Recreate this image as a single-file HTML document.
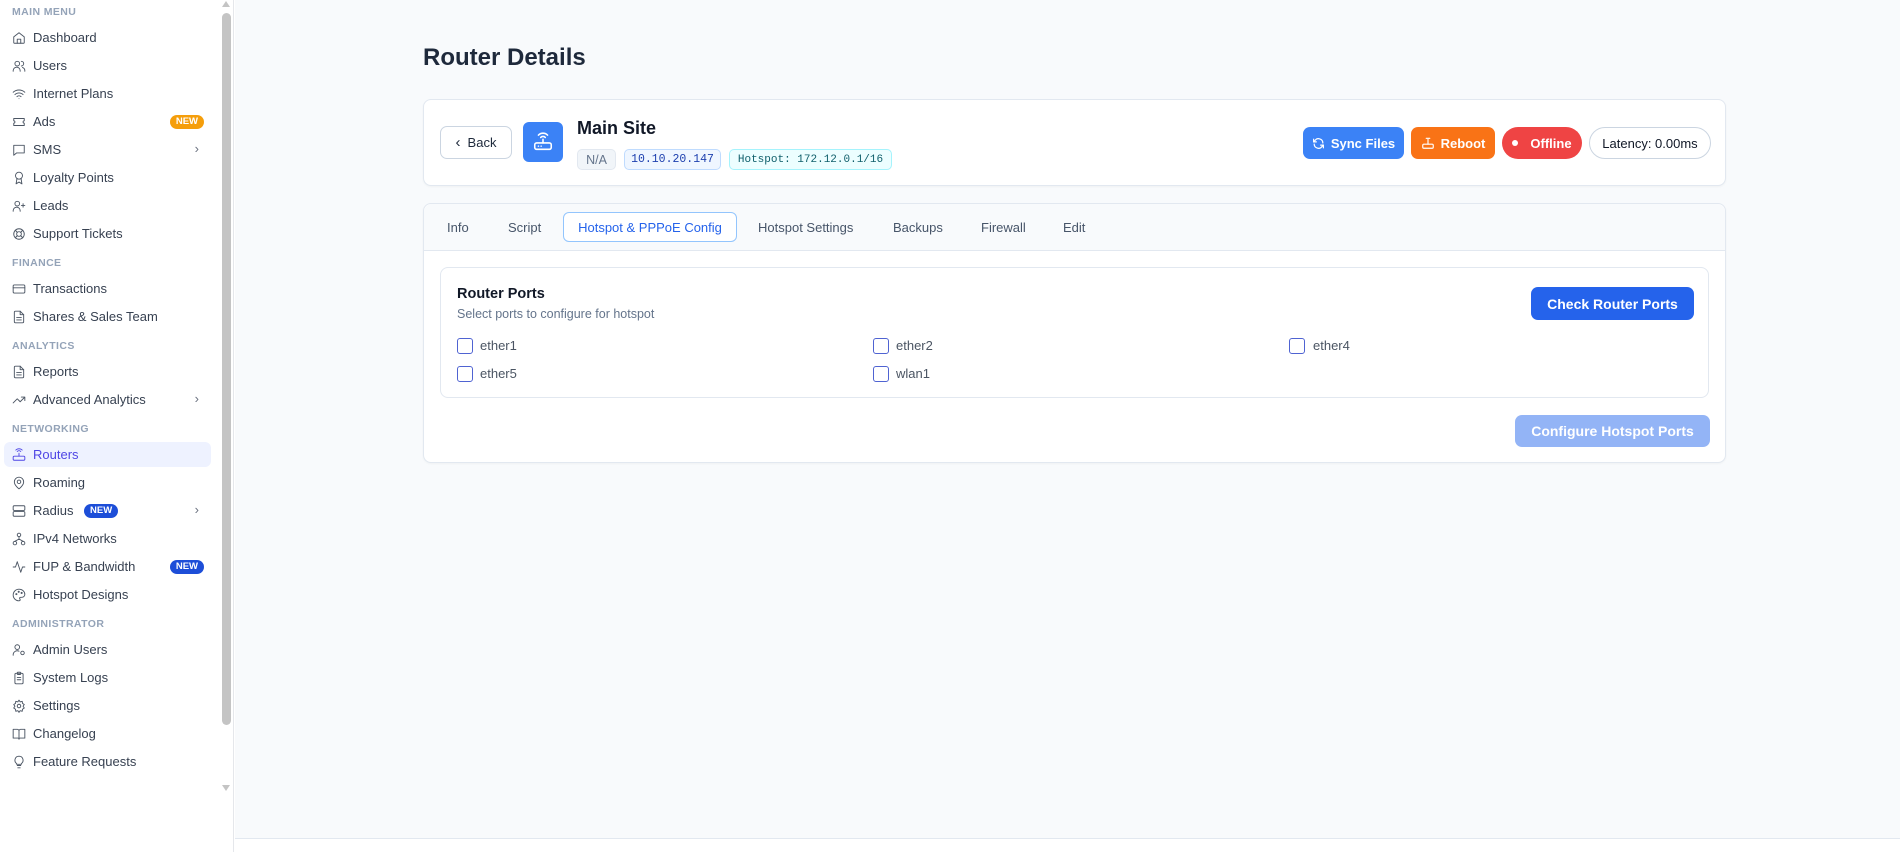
<!DOCTYPE html>
<html><head><meta charset="utf-8"><style>
*{box-sizing:border-box;margin:0;padding:0}
body{width:1900px;height:852px;overflow:hidden;font-family:"Liberation Sans",sans-serif;background:#fff;position:relative;color:#334155}
.sb{position:absolute;left:0;top:0;width:234px;height:852px;background:#fff;border-right:1px solid #e5e7eb}
.h{position:absolute;left:12px;font-size:10.5px;font-weight:bold;color:#94a3b8;letter-spacing:.4px}
.it{position:absolute;left:4px;width:207px;height:25px;font-size:13px;color:#374151;display:flex;align-items:center;padding-left:29px;border-radius:6px}
.it svg{position:absolute;left:8px;top:6px;width:14px;height:14px;fill:none;stroke:#4b5563;stroke-width:1.6;stroke-linecap:round;stroke-linejoin:round}
.it.act{background:#eef2ff;color:#4f46e5}
.it.act svg{stroke:#4f46e5}
.chev{position:absolute;right:12px;top:4px;color:#6b7280;font-size:13px}
.new{position:absolute;height:14px;border-radius:7px;font-size:9.5px;font-weight:bold;color:#fff;padding:0 6px;line-height:14px;top:5.5px}
.main{position:absolute;left:235px;top:0;width:1665px;height:839px;background:#f8fafc;border-bottom:1px solid #e2e8f0}
.card{position:absolute;background:#fff;border:1px solid #e2e8f0;border-radius:8px;box-shadow:0 1px 2px rgba(0,0,0,.04)}
.btn{position:absolute;border-radius:7px;color:#fff;font-weight:bold;font-size:13px;display:flex;align-items:center;justify-content:center;gap:6px}
.badge{position:absolute;height:21px;border-radius:5px;font-family:"Liberation Mono",monospace;font-size:11.5px;display:flex;align-items:center;justify-content:center}
.tab{position:absolute;top:220px;font-size:13px;color:#475569}
.cb{position:absolute;width:16px;height:16px;border:1.5px solid #4f63d2;border-radius:3px}
.lb{position:absolute;font-size:13px;color:#4b5563}
</style></head><body>
<div class="sb">
<div style="position:absolute;left:222px;top:13px;width:9px;height:712px;background:#c4c4c4;border-radius:5px"></div>
<div style="position:absolute;left:222px;top:1px;width:0;height:0;border-left:4.5px solid transparent;border-right:4.5px solid transparent;border-bottom:6px solid #c4c4c4"></div>
<div style="position:absolute;left:222px;top:785px;width:0;height:0;border-left:4.5px solid transparent;border-right:4.5px solid transparent;border-top:6px solid #c4c4c4"></div>

<div class="h" style="top:6px">MAIN MENU</div>
<div class="it" style="top:25px"><svg viewBox="0 0 24 24"><path d="M3 10l9-7 9 7v10a1 1 0 0 1-1 1H4a1 1 0 0 1-1-1z"/><path d="M9 21v-7h6v7"/></svg>Dashboard</div>
<div class="it" style="top:53px"><svg viewBox="0 0 24 24"><circle cx="9" cy="8" r="4"/><path d="M2 21v-1a6 6 0 0 1 12 0v1M16 4a4 4 0 0 1 0 8M22 21v-1a6 6 0 0 0-4-5.6"/></svg>Users</div>
<div class="it" style="top:81px"><svg viewBox="0 0 24 24"><path d="M2 9a15 15 0 0 1 20 0M5 13a10 10 0 0 1 14 0M8.5 16.5a5 5 0 0 1 7 0M12 20h.01"/></svg>Internet Plans</div>
<div class="it" style="top:109px"><svg viewBox="0 0 24 24"><path d="M3 6h18v4a2 2 0 0 0 0 4v4H3v-4a2 2 0 0 0 0-4z"/></svg>Ads<span class="new" style="right:7px;background:#f59e0b">NEW</span></div>
<div class="it" style="top:137px"><svg viewBox="0 0 24 24"><path d="M3 4h18v13H8l-5 4z"/></svg>SMS<span class="chev">›</span></div>
<div class="it" style="top:165px"><svg viewBox="0 0 24 24"><circle cx="12" cy="8" r="6"/><path d="M8.5 13L7 22l5-3 5 3-1.5-9"/></svg>Loyalty Points</div>
<div class="it" style="top:193px"><svg viewBox="0 0 24 24"><circle cx="9" cy="8" r="4"/><path d="M2 21v-1a6 6 0 0 1 12 0v1M19 8v6M16 11h6"/></svg>Leads</div>
<div class="it" style="top:221px"><svg viewBox="0 0 24 24"><circle cx="12" cy="12" r="9"/><circle cx="12" cy="12" r="4"/><path d="M5.6 5.6l3.6 3.6M14.8 14.8l3.6 3.6M18.4 5.6l-3.6 3.6M9.2 14.8l-3.6 3.6"/></svg>Support Tickets</div>
<div class="h" style="top:257px">FINANCE</div>
<div class="it" style="top:276px"><svg viewBox="0 0 24 24"><rect x="2" y="5" width="20" height="14" rx="2"/><path d="M2 10h20"/></svg>Transactions</div>
<div class="it" style="top:304px"><svg viewBox="0 0 24 24"><path d="M14 2H6a2 2 0 0 0-2 2v16a2 2 0 0 0 2 2h12a2 2 0 0 0 2-2V8z"/><path d="M14 2v6h6M8 13h8M8 17h8"/></svg>Shares &amp; Sales Team</div>
<div class="h" style="top:340px">ANALYTICS</div>
<div class="it" style="top:359px"><svg viewBox="0 0 24 24"><path d="M14 2H6a2 2 0 0 0-2 2v16a2 2 0 0 0 2 2h12a2 2 0 0 0 2-2V8z"/><path d="M14 2v6h6M8 13h8M8 17h8"/></svg>Reports</div>
<div class="it" style="top:387px"><svg viewBox="0 0 24 24"><path d="M2 17l7-7 5 5 8-8M16 7h6v6"/></svg>Advanced Analytics<span class="chev">›</span></div>
<div class="h" style="top:423px">NETWORKING</div>
<div class="it act" style="top:442px"><svg viewBox="0 0 24 24"><rect x="2" y="14" width="20" height="7" rx="2"/><path d="M12 14v-5M9 6a4 4 0 0 1 6 0M6.5 3.5a8 8 0 0 1 11 0"/></svg>Routers</div>
<div class="it" style="top:470px"><svg viewBox="0 0 24 24"><path d="M20 10c0 6-8 12-8 12s-8-6-8-12a8 8 0 0 1 16 0z"/><circle cx="12" cy="10" r="3"/></svg>Roaming</div>
<div class="it" style="top:498px"><svg viewBox="0 0 24 24"><rect x="2" y="3" width="20" height="8" rx="2"/><rect x="2" y="13" width="20" height="8" rx="2"/></svg>Radius<span class="new" style="left:80px;background:#1d4ed8">NEW</span><span class="chev">›</span></div>
<div class="it" style="top:526px"><svg viewBox="0 0 24 24"><circle cx="12" cy="5" r="3"/><circle cx="5" cy="19" r="3"/><circle cx="19" cy="19" r="3"/><path d="M12 8v4M5 16l7-4 7 4"/></svg>IPv4 Networks</div>
<div class="it" style="top:554px"><svg viewBox="0 0 24 24"><path d="M2 12h4l3-9 6 18 3-9h4"/></svg>FUP &amp; Bandwidth<span class="new" style="right:7px;background:#1d4ed8">NEW</span></div>
<div class="it" style="top:582px"><svg viewBox="0 0 24 24"><path d="M12 2a10 10 0 0 0 0 20c1.5 0 2-1 2-2s-1-1.5-1-2.5 1-1.5 2-1.5h2a5 5 0 0 0 5-5c0-5-4.5-9-10-9z"/><circle cx="7.5" cy="10.5" r="1"/><circle cx="11.5" cy="6.5" r="1"/><circle cx="16.5" cy="8.5" r="1"/></svg>Hotspot Designs</div>
<div class="h" style="top:618px">ADMINISTRATOR</div>
<div class="it" style="top:637px"><svg viewBox="0 0 24 24"><circle cx="9" cy="7" r="4"/><path d="M2 21v-1a7 7 0 0 1 10-6"/><circle cx="18" cy="17" r="3"/></svg>Admin Users</div>
<div class="it" style="top:665px"><svg viewBox="0 0 24 24"><rect x="5" y="4" width="14" height="18" rx="2"/><rect x="9" y="2" width="6" height="4" rx="1"/><path d="M9 11h6M9 15h6"/></svg>System Logs</div>
<div class="it" style="top:693px"><svg viewBox="0 0 24 24"><circle cx="12" cy="12" r="3"/><path d="M12 2l2 3 3.5-1 .5 3.5 3 2-2 3 2 3-3 2-.5 3.5-3.5-1-2 3-2-3-3.5 1-.5-3.5-3-2 2-3-2-3 3-2 .5-3.5 3.5 1z"/></svg>Settings</div>
<div class="it" style="top:721px"><svg viewBox="0 0 24 24"><path d="M2 4h7a3 3 0 0 1 3 3v14a2 2 0 0 0-2-2H2zM22 4h-7a3 3 0 0 0-3 3v14a2 2 0 0 1 2-2h8z"/></svg>Changelog</div>
<div class="it" style="top:749px"><svg viewBox="0 0 24 24"><path d="M9 18h6M10 22h4M12 2a7 7 0 0 0-4 12.7V16h8v-1.3A7 7 0 0 0 12 2z"/></svg>Feature Requests</div>
</div>

<div class="main">
<div style="position:absolute;left:188px;top:44px;font-size:24px;font-weight:bold;color:#1e293b">Router Details</div>

<div class="card" style="left:188px;top:99px;width:1303px;height:87px">
 <div style="position:absolute;left:16px;top:26px;width:72px;height:33px;border:1px solid #cbd5e1;border-radius:7px;font-size:13px;color:#1e293b;display:flex;align-items:center;justify-content:center;gap:7px"><span style="font-size:15px">‹</span>Back</div>
 <div style="position:absolute;left:99px;top:22px;width:40px;height:40px;background:#3b82f6;border-radius:6px">
  <svg viewBox="0 0 24 24" width="22" height="22" style="position:absolute;left:9px;top:9px" fill="none" stroke="#fff" stroke-width="1.7" stroke-linecap="round"><rect x="3" y="13" width="18" height="7" rx="2"/><path d="M12 13V9M9.5 7a3.5 3.5 0 0 1 5 0M7 4.5a7 7 0 0 1 10 0M7 16.5h.01M10 16.5h.01"/></svg></div>
 <div style="position:absolute;left:153px;top:18px;font-size:18px;font-weight:bold;color:#111827">Main Site</div>
 <div class="badge" style="left:153px;top:49px;width:39px;background:#f1f5f9;border:1px solid #e2e8f0;color:#64748b;font-family:'Liberation Sans',sans-serif;font-size:12.5px">N/A</div>
 <div class="badge" style="left:200px;top:49px;width:97px;background:#eff6ff;border:1px solid #bfdbfe;color:#1e40af">10.10.20.147</div>
 <div class="badge" style="left:305px;top:49px;width:163px;background:#ecfeff;border:1px solid #a5f3fc;color:#0f5f6b;font-size:11px">Hotspot: 172.12.0.1/16</div>
 <div class="btn" style="left:879px;top:27px;width:101px;height:32px;background:#3b82f6"><svg width="13" height="13" viewBox="0 0 24 24" fill="none" stroke="#fff" stroke-width="2.2" stroke-linecap="round"><path d="M20 11a8 8 0 0 0-14.5-4.5L3 9M4 13a8 8 0 0 0 14.5 4.5L21 15M3 4v5h5M21 20v-5h-5"/></svg>Sync Files</div>
 <div class="btn" style="left:987px;top:27px;width:84px;height:32px;background:#f97316"><svg width="14" height="14" viewBox="0 0 24 24" fill="none" stroke="#fff" stroke-width="2" stroke-linecap="round"><rect x="3" y="14" width="18" height="7" rx="2"/><path d="M12 14V6M9 4h6"/></svg>Reboot</div>
 <div class="btn" style="left:1078px;top:27px;width:80px;height:32px;background:#ef4444;border-radius:16px"><span style="width:6px;height:6px;border-radius:3px;background:#fff;margin-right:6px"></span>Offline</div>
 <div style="position:absolute;left:1165px;top:27px;width:122px;height:32px;border:1px solid #cbd5e1;border-radius:16px;font-size:13px;color:#111827;display:flex;align-items:center;justify-content:center">Latency: 0.00ms</div>
</div>

<div class="card" style="left:188px;top:203px;width:1303px;height:260px">
 <div style="position:absolute;left:0;top:0;right:0;height:47px;background:#f8fafc;border-bottom:1px solid #e2e8f0;border-radius:8px 8px 0 0"></div>
</div>
<div class="tab" style="left:212px">Info</div>
<div class="tab" style="left:273px">Script</div>
<div style="position:absolute;left:328px;top:212px;width:174px;height:30px;background:#fff;border:1px solid #93c5fd;border-radius:6px;font-size:13px;color:#2563eb;display:flex;align-items:center;justify-content:center">Hotspot &amp; PPPoE Config</div>
<div class="tab" style="left:523px">Hotspot Settings</div>
<div class="tab" style="left:658px">Backups</div>
<div class="tab" style="left:746px">Firewall</div>
<div class="tab" style="left:828px">Edit</div>

<div class="card" style="left:205px;top:267px;width:1269px;height:131px;box-shadow:none">
 <div style="position:absolute;left:16px;top:18px;font-size:14.5px;font-weight:bold;color:#111827">Router Ports</div>
 <div style="position:absolute;left:16px;top:39px;font-size:12.5px;color:#64748b">Select ports to configure for hotspot</div>
 <div class="btn" style="left:1090px;top:19px;width:163px;height:33px;background:#2563eb;font-size:14px">Check Router Ports</div>
</div>
<div class="cb" style="left:222px;top:338px"></div><div class="lb" style="left:245px;top:338px">ether1</div>
<div class="cb" style="left:638px;top:338px"></div><div class="lb" style="left:661px;top:338px">ether2</div>
<div class="cb" style="left:1054px;top:338px"></div><div class="lb" style="left:1078px;top:338px">ether4</div>
<div class="cb" style="left:222px;top:366px"></div><div class="lb" style="left:245px;top:366px">ether5</div>
<div class="cb" style="left:638px;top:366px"></div><div class="lb" style="left:661px;top:366px">wlan1</div>
<div class="btn" style="left:1280px;top:415px;width:195px;height:32px;background:#93b4f6;font-size:14px">Configure Hotspot Ports</div>
</div>
</body></html>
